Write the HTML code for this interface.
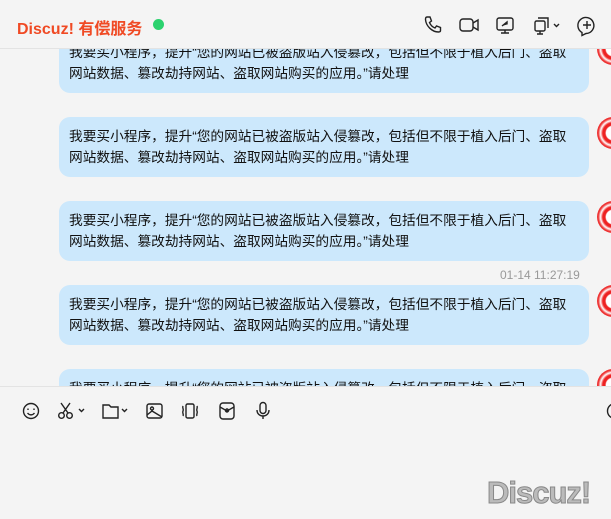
<!DOCTYPE html>
<html><head><meta charset="utf-8"><style>
html,body{margin:0;width:611px;height:519px;overflow:hidden;}
body{background:#f4f4f4;position:relative;font-family:"Liberation Sans","Noto Sans CJK SC",sans-serif;}
.msgs{position:absolute;left:0;top:0;width:611px;height:386px;overflow:hidden;}
.b{position:absolute;left:59px;width:510px;padding:9px 10px 0;height:51px;background:#cce8fc;border-radius:11px;font-size:13.7px;line-height:21px;color:#111;white-space:nowrap;}
.av{position:absolute;left:597px;width:32px;height:32px;border-radius:50%;background:radial-gradient(circle,#fff 30%,#e22 35%,#e22 45%,#fff 55%,#e33 65%);}
.hdr{position:absolute;left:0;top:0;width:611px;height:48px;background:#f4f4f4;border-bottom:1px solid #e3e3e3;}
.title{position:absolute;left:17px;top:15px;font-size:16px;font-weight:bold;color:#f04a24;}
.dot{position:absolute;left:153px;top:19px;width:11px;height:11px;border-radius:50%;background:#2bd26e;}
.ts{position:absolute;left:500px;top:268px;font-size:12px;color:#999;}
.tb{position:absolute;left:0;top:386px;width:611px;height:132px;background:#f4f4f4;border-top:1px solid #e3e3e3;}
svg{position:absolute;}
.wm{position:absolute;left:487px;top:475px;font-size:31px;font-weight:bold;color:#bbb;-webkit-text-stroke:1px #888;letter-spacing:-1px;}
</style></head><body>
<div class="msgs">
<div class="b" style="top:33px">我要买小程序，提升“您的网站已被盗版站入侵篡改，包括但不限于植入后门、盗取<br>网站数据、篡改劫持网站、盗取网站购买的应用。”请处理</div>
<div class="av" style="top:33px"></div>
<div class="b" style="top:117px">我要买小程序，提升“您的网站已被盗版站入侵篡改，包括但不限于植入后门、盗取<br>网站数据、篡改劫持网站、盗取网站购买的应用。”请处理</div>
<div class="av" style="top:117px"></div>
<div class="b" style="top:201px">我要买小程序，提升“您的网站已被盗版站入侵篡改，包括但不限于植入后门、盗取<br>网站数据、篡改劫持网站、盗取网站购买的应用。”请处理</div>
<div class="av" style="top:201px"></div>
<div class="ts">01-14 11:27:19</div>
<div class="b" style="top:285px">我要买小程序，提升“您的网站已被盗版站入侵篡改，包括但不限于植入后门、盗取<br>网站数据、篡改劫持网站、盗取网站购买的应用。”请处理</div>
<div class="av" style="top:285px"></div>
<div class="b" style="top:369px">我要买小程序，提升“您的网站已被盗版站入侵篡改，包括但不限于植入后门、盗取<br>网站数据、篡改劫持网站、盗取网站购买的应用。”请处理</div>
<div class="av" style="top:369px"></div>
</div>
<div class="hdr">
<div class="title">Discuz! 有偿服务</div><div class="dot"></div>
<svg style="left:423px;top:15px" width="20" height="20" viewBox="0 0 20 20" fill="none" stroke="#222" stroke-width="1.4"><path d="M4 2l3 0 1.5 4-2 1.5c1 2.5 3 4.5 5.5 5.5l1.5-2 4 1.5v3c0 1-1 1.5-2 1.5C9 17 3 11 2.5 4.5 2.5 3 3 2 4 2z"/></svg>
<svg style="left:458px;top:15px" width="22" height="20" viewBox="0 0 22 20" fill="none" stroke="#222" stroke-width="1.4"><rect x="2" y="4" width="13" height="12" rx="3"/><path d="M15 8l5-3v10l-5-3"/></svg>
<svg style="left:495px;top:15px" width="20" height="20" viewBox="0 0 20 20" fill="none" stroke="#222" stroke-width="1.4"><rect x="2" y="3" width="16" height="12" rx="2"/><path d="M10 15v3M6 18h8"/><path d="M7 11l5-4v2.5" fill="#222"/></svg>
<svg style="left:532px;top:15px" width="30" height="22" viewBox="0 0 30 22" fill="none" stroke="#222" stroke-width="1.4"><rect x="3" y="6" width="10" height="10" rx="1.5"/><path d="M6 3h10v10M8 16v3M5 19h6M22 9l2.5 2.5L27 9"/></svg>
<svg style="left:576px;top:15px" width="22" height="22" viewBox="0 0 22 22" fill="none" stroke="#222" stroke-width="1.4"><path d="M6 17.5A8 8 0 1 1 10 18.5L6 20.5z"/><path d="M11 6v8M7 10h8"/></svg>
</div>
<div class="tb">
<svg style="left:21px;top:14px" width="20" height="20" viewBox="0 0 20 20" fill="none" stroke="#222" stroke-width="1.4"><circle cx="10" cy="10" r="7.5"/><path d="M7 7.5v1.5M13 7.5v1.5M6.5 12c2 2.5 5 2.5 7 0"/></svg>
<svg style="left:57px;top:14px" width="30" height="20" viewBox="0 0 30 20" fill="none" stroke="#222" stroke-width="1.4"><circle cx="4.5" cy="14.5" r="2.8"/><circle cx="12.5" cy="14.5" r="2.8"/><path d="M4 2l7 10M13 2l-7 10M22 8l2.5 2.5L27 8"/></svg>
<svg style="left:101px;top:14px" width="30" height="20" viewBox="0 0 30 20" fill="none" stroke="#222" stroke-width="1.4"><path d="M2 4h6l2 2h7v11H2z"/><path d="M21 8l2.5 2.5L26 8"/></svg>
<svg style="left:145px;top:14px" width="20" height="20" viewBox="0 0 20 20" fill="none" stroke="#222" stroke-width="1.4"><rect x="2" y="3" width="15" height="14" rx="2"/><circle cx="7" cy="7.5" r="1.5"/><path d="M2 14l5-4 10 6"/></svg>
<svg style="left:180px;top:14px" width="20" height="20" viewBox="0 0 20 20" fill="none" stroke="#222" stroke-width="1.4"><rect x="6" y="3" width="8" height="14" rx="1.5"/><path d="M3 5c-1 2 1 3 0 5s1 3 0 5M17 5c1 2-1 3 0 5s-1 3 0 5"/></svg>
<svg style="left:217px;top:14px" width="20" height="20" viewBox="0 0 20 20" fill="none" stroke="#222" stroke-width="1.4"><rect x="3" y="2" width="14" height="16" rx="3"/><path d="M3 6l7 4 7-4"/><circle cx="10" cy="9.5" r="1.5"/></svg>
<svg style="left:253px;top:14px" width="20" height="20" viewBox="0 0 20 20" fill="none" stroke="#222" stroke-width="1.4"><rect x="7" y="1.5" width="6" height="11" rx="3"/><path d="M4 9c0 4 3 6 6 6s6-2 6-6M10 15v3"/></svg>
<svg style="left:605px;top:14px" width="6" height="20" viewBox="0 0 6 20" fill="none" stroke="#222" stroke-width="1.4"><circle cx="10" cy="10" r="7.5"/></svg>
</div>
<div class="wm">Discuz!</div>
</body></html>
